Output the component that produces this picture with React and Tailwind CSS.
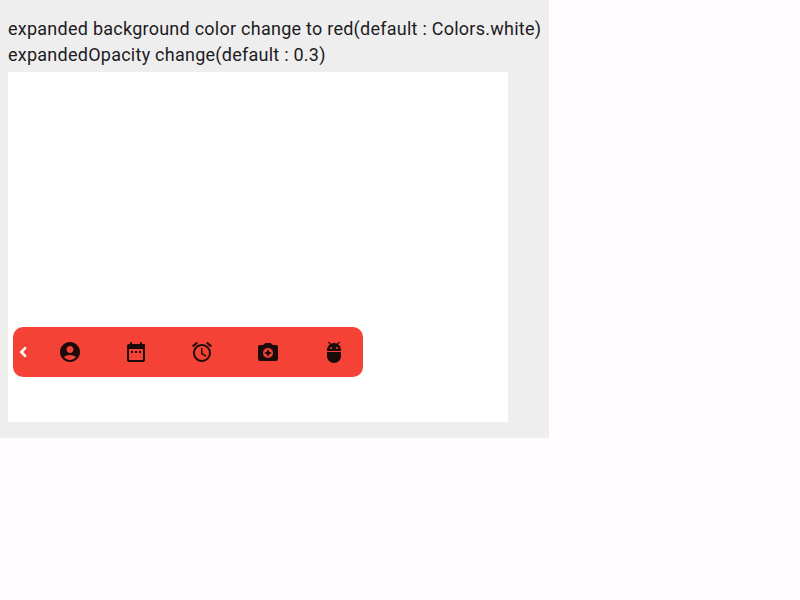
import { MdAccountCircle, MdAccessAlarm } from "react-icons/md";

function CalendarIcon({ className }) {
  return (
    <svg viewBox="0 0 24 24" className={className} fill="currentColor">
      <path d="M7 11h2v2H7zm4 0h2v2h-2zm4 0h2v2h-2z" />
      <path d="M20 4h-2V3a1 1 0 0 0-2 0v1H8V3a1 1 0 0 0-2 0v1H5c-1.110 0-2 .9-2 2v14c0 1.100.89 2 2 2h14c1.100 0 2-.9 2-2V5c0-.55-.45-1-1-1zm-2 16H6c-.55 0-1-.45-1-1V9h14v10c0 .55-.45 1-1 1z" />
    </svg>
  );
}

function CameraIcon({ className }) {
  return (
    <svg viewBox="0 0 24 24" className={className} fill="currentColor">
      <path
        fillRule="evenodd"
        d="M20 5h-3.170l-1.240-1.350A2 2 0 0 0 14.120 3H9.880a2 2 0 0 0-1.470.65L7.170 5H4a2 2 0 0 0-2 2v12a2 2 0 0 0 2 2h16a2 2 0 0 0 2-2V7a2 2 0 0 0-2-2zM12 18a5 5 0 1 1 0-10 5 5 0 0 1 0 10z"
      />
      <path d="M12 9l-1.250 2.750L8 13l2.750 1.250L12 17l1.250-2.750L16 13l-2.750-1.250z" />
    </svg>
  );
}

function RobotIcon({ className }) {
  return (
    <svg viewBox="0 0 24 24" className={className} fill="currentColor">
      <path d="M5 16c0 3.870 3.130 7 7 7s7-3.130 7-7v-4H5v4z" />
      <path
        fillRule="evenodd"
        d="M16.120 4.370l1.690-1.690a.59.59 0 0 0-.83-.83l-1.880 1.890A6.900 6.900 0 0 0 12 3c-1.120 0-2.160.27-3.090.74L7.030 1.860a.59.59 0 0 0-.83.83l1.690 1.690C6.140 5.640 5 7.680 5 10v1h14v-1c0-2.320-1.140-4.360-2.880-5.630zM9 9a1 1 0 1 1 0-2 1 1 0 0 1 0 2zm6 0a1 1 0 1 1 0-2 1 1 0 0 1 0 2z"
      />
    </svg>
  );
}

const items = [MdAccountCircle, CalendarIcon, MdAccessAlarm, CameraIcon, RobotIcon];

function CollapseIcon() {
  return (
    <svg
      viewBox="0 0 20 20"
      className="size-5 shrink-0 text-white"
      fill="none"
      stroke="currentColor"
      strokeWidth="2.5"
      strokeLinecap="round"
    >
      <path d="M12.100 6.200L8.300 10l3.800 3.800" />
    </svg>
  );
}

export default function App() {
  return (
    <div className="h-screen w-full overflow-hidden bg-[#fffbff]">
      <div className="h-[438px] w-[549px] bg-[#eeeeee] px-2 pt-4 font-['Roboto',sans-serif]">
        <p className="h-[26px] whitespace-nowrap text-[18px] leading-[26px] tracking-[0.25px] text-[#1d1b1e]">
          expanded background color change to red(default : Colors.white)
        </p>
        <p className="h-[30px] whitespace-nowrap text-[18px] leading-[26px] tracking-[0.25px] text-[#1d1b1e]">
          expandedOpacity change(default : 0.3)
        </p>
        <div className="flex h-[350px] w-[500px] items-end bg-white pb-[45px] pl-[5px]">
          <div className="flex h-[50px] w-[350px] items-center rounded-[10px] bg-[#f44336]">
            <CollapseIcon />
            <div className="ml-1 flex flex-1 items-center">
              {items.map((Icon, i) => (
                <div key={i} className="flex w-[66px] shrink-0 justify-center text-[#1d0b0a]">
                  <Icon className="size-6" />
                </div>
              ))}
            </div>
          </div>
        </div>
      </div>
    </div>
  );
}
